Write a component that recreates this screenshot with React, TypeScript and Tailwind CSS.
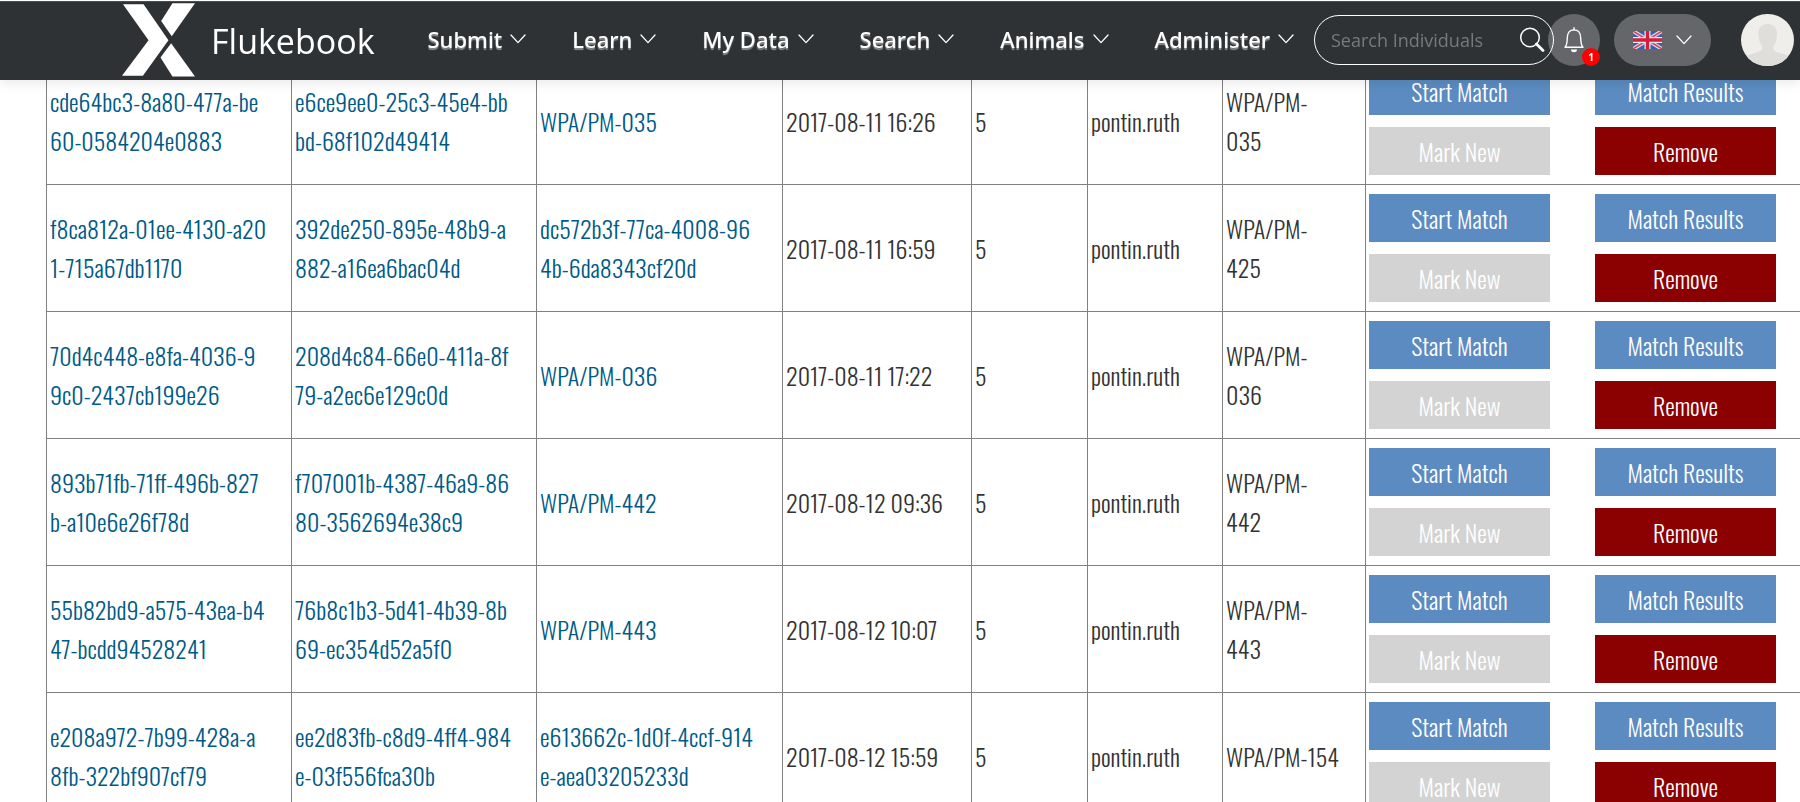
import { clsx } from "clsx";

interface MatchRow {
  encounter: string;
  asset: string;
  individual: string;
  date: string;
  label: string;
}

const navItems = ["Submit", "Learn", "My Data", "Search", "Animals", "Administer"];

// long ids carry their own line breaks
const rows: MatchRow[] = [
  {
    encounter: "cde64bc3-8a80-477a-be\n60-0584204e0883",
    asset: "e6ce9ee0-25c3-45e4-bb\nbd-68f102d49414",
    individual: "WPA/PM-035",
    date: "2017-08-11 16:26",
    label: "WPA/PM-\n035",
  },
  {
    encounter: "f8ca812a-01ee-4130-a20\n1-715a67db1170",
    asset: "392de250-895e-48b9-a\n882-a16ea6bac04d",
    individual: "dc572b3f-77ca-4008-96\n4b-6da8343cf20d",
    date: "2017-08-11 16:59",
    label: "WPA/PM-\n425",
  },
  {
    encounter: "70d4c448-e8fa-4036-9\n9c0-2437cb199e26",
    asset: "208d4c84-66e0-411a-8f\n79-a2ec6e129c0d",
    individual: "WPA/PM-036",
    date: "2017-08-11 17:22",
    label: "WPA/PM-\n036",
  },
  {
    encounter: "893b71fb-71ff-496b-827\nb-a10e6e26f78d",
    asset: "f707001b-4387-46a9-86\n80-3562694e38c9",
    individual: "WPA/PM-442",
    date: "2017-08-12 09:36",
    label: "WPA/PM-\n442",
  },
  {
    encounter: "55b82bd9-a575-43ea-b4\n47-bcdd94528241",
    asset: "76b8c1b3-5d41-4b39-8b\n69-ec354d52a5f0",
    individual: "WPA/PM-443",
    date: "2017-08-12 10:07",
    label: "WPA/PM-\n443",
  },
  {
    encounter: "e208a972-7b99-428a-a\n8fb-322bf907cf79",
    asset: "ee2d83fb-c8d9-4ff4-984\ne-03f556fca30b",
    individual: "e613662c-1d0f-4ccf-914\ne-aea03205233d",
    date: "2017-08-12 15:59",
    label: "WPA/PM-154",
  },
];

function Chevron() {
  return (
    <svg viewBox="0 0 16 10" className="w-4 h-[10px] shrink-0" fill="none" stroke="white" strokeWidth="1.3" strokeLinecap="round" strokeLinejoin="round" aria-hidden="true">
      <path d="M1 1l7 7.6L15 1" />
    </svg>
  );
}

function Logo() {
  return (
    <svg viewBox="0 0 220 222" className="w-[73px] h-[74px] shrink-0" fill="white" aria-hidden="true">
      <path d="M3 3H65L140 112L63 219H0L80 112Z" />
      <path d="M152 0H220L150 100L118 54Z" />
      <path d="M148 121L220 221H152L116 164Z" />
    </svg>
  );
}

function SearchIcon() {
  return (
    <svg viewBox="0 0 26 26" className="w-[26px] h-[26px]" fill="none" stroke="white" aria-hidden="true">
      <circle cx="11" cy="10.5" r="9.3" strokeWidth="1.5" />
      <path d="M17.5 17L24 23.5" strokeWidth="2.8" strokeLinecap="round" />
    </svg>
  );
}

function BellIcon() {
  return (
    <svg viewBox="0 0 22 26" className="w-[22px] h-[26px]" fill="none" stroke="white" strokeWidth="1.4" strokeLinejoin="round" aria-hidden="true">
      <path d="M2 20.3C3.6 18.6 4.2 15.5 4.3 11C4.4 6 7 2.9 11 2.9S17.6 6 17.7 11C17.8 15.5 18.4 18.6 20 20.3Z" />
      <path d="M11 .8v2" strokeLinecap="round" />
      <path d="M8 22.5h6a3 2.8 0 0 1-6 0Z" fill="white" stroke="none" />
    </svg>
  );
}

function Flag() {
  return (
    <svg viewBox="0 0 29 18" className="w-[29px] h-[18px]" aria-hidden="true">
      <path fill="#3b5fae" d="M0 0h29v18H0z" />
      <path stroke="#d5dcec" strokeWidth="4" d="M0 0L29 18M29 0L0 18" />
      <path stroke="#d9455a" strokeWidth="1.5" d="M0 0L29 18M29 0L0 18" />
      <path stroke="#e6e6ee" strokeWidth="6" d="M14.5 0v18M0 9h29" />
      <path stroke="#d2203a" strokeWidth="3.4" d="M14.5 0v18M0 9h29" />
    </svg>
  );
}

function Avatar() {
  return (
    <svg viewBox="0 0 53 52" className="w-[53px] h-[52px]" aria-hidden="true">
      <path fill="#efeeeb" d="M0 0h53v52H0z" />
      <path
        fill="#dfdeda"
        d="M26.5 10C20.5 10 17.5 13.5 17.5 19.5C17.5 25 18.5 29 21 32V36C17 39 7 40 2 44V52H51V44C46 40 36 39 32.5 36V32C35 29 36 25 36 19.5C36 13.5 32.5 10 26.5 10Z"
      />
    </svg>
  );
}

function Header() {
  return (
    <header className="fixed inset-x-0 top-0 z-10 flex items-center h-20 pl-[122px] pr-[6px] bg-[#2f3235] text-white font-['Open_Sans','Noto_Sans',sans-serif] shadow-[inset_0_1px_0_#ffffff,inset_0_2px_0_#4a504f,0_4px_10px_rgba(0,0,0,0.08)]">
      <a href="#" className="flex items-center gap-4">
        <Logo />
        <span className="pt-[2px] text-[34px] leading-10">Flukebook</span>
      </a>

      <nav className="flex items-center gap-[46px] ml-[53px] pb-[2px] text-[22px] font-medium font-['Noto_Sans','Open_Sans',sans-serif]">
        {navItems.map((item) => (
          <button key={item} type="button" className="flex items-center gap-2 whitespace-nowrap [text-shadow:0_2px_1px_rgba(255,255,255,0.45)]">
            {item}
            <Chevron />
          </button>
        ))}
      </nav>

      <div className="flex items-center ml-auto">
        <form className="relative z-10 flex items-center w-60 h-[50px] pl-4 pr-2 rounded-full border border-white">
          <input
            type="text"
            aria-label="Search Individuals"
            placeholder="Search Individuals"
            className="flex-1 min-w-0 text-lg bg-transparent outline-none placeholder:text-[#77797b]"
          />
          <button type="button" aria-label="Search">
            <SearchIcon />
          </button>
        </form>
        <button type="button" aria-label="Notifications" className="relative flex items-center justify-center size-[52px] -ml-[6px] rounded-full bg-[#656669]">
          <BellIcon />
          <span className="absolute right-0 bottom-0 z-10 flex items-center justify-center size-[18px] rounded-full bg-[#ff0000] text-[10px] font-bold">
            1
          </span>
        </button>
        <button type="button" aria-label="Language" className="flex items-center justify-center gap-[14px] w-[97px] h-[52px] ml-[14px] rounded-full bg-[#656669]">
          <Flag />
          <Chevron />
        </button>
        <a href="#" aria-label="Profile" className="ml-[30px] rounded-full overflow-hidden">
          <Avatar />
        </a>
      </div>
    </header>
  );
}

function ActionButton({ label, className }: { label: string; className: string }) {
  return (
    <button type="button" className={clsx("w-[181px] h-12 text-white", className)}>
      {label}
    </button>
  );
}

export default function App() {
  return (
    <div className="min-h-screen overflow-hidden bg-white">
      <Header />
      <main className="pt-[57px] pl-[46px]">
        <table className="w-full table-fixed border-collapse text-left text-[24px] leading-[39px] font-light text-[#333333] font-['Oswald','Roboto_Condensed',sans-serif]">
          <colgroup>
            <col className="w-[245px]" />
            <col className="w-[245px]" />
            <col className="w-[246px]" />
            <col className="w-[189px]" />
            <col className="w-[116px]" />
            <col className="w-[135px]" />
            <col className="w-[143px]" />
            <col />
          </colgroup>
          <tbody className="[&_td]:border-y [&_td]:border-l [&_td]:border-[#808080] [&_td]:pl-[3px] [&_td]:whitespace-pre-line [&_a]:text-[#005a87]">
            {rows.map((row) => (
              <tr key={row.encounter}>
                <td><a href="#">{row.encounter}</a></td>
                <td><a href="#">{row.asset}</a></td>
                <td><a href="#">{row.individual}</a></td>
                <td>{row.date}</td>
                <td>5</td>
                <td>pontin.ruth</td>
                <td>{row.label}</td>
                <td>
                  <div className="grid grid-cols-[181px_181px] gap-x-[45px] gap-y-3 py-[9px]">
                    <ActionButton label="Start Match" className="bg-[#5b8bc1]" />
                    <ActionButton label="Match Results" className="bg-[#5b8bc1]" />
                    <ActionButton label="Mark New" className="bg-[#d3d3d3]" />
                    <ActionButton label="Remove" className="bg-[#8b0000]" />
                  </div>
                </td>
              </tr>
            ))}
          </tbody>
        </table>
      </main>
    </div>
  );
}
